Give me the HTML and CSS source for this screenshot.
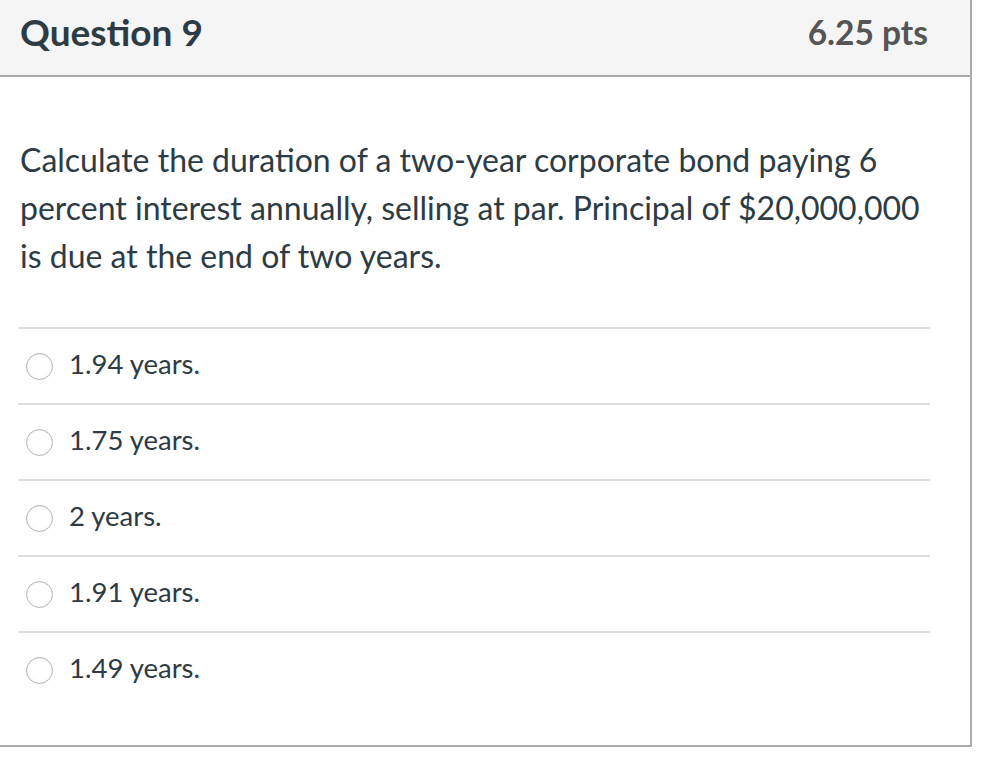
FILE: index.html
```html
<!DOCTYPE html>
<html>
<head>
<meta charset="utf-8">
<link rel="stylesheet" href="styles.css">
</head>
<body>
<div class="question">
  <div class="header">
    <span class="title">Question 9</span>
    <span class="points">6.25 pts</span>
  </div>
  <div class="body">
    <p class="prompt">Calculate the duration of a two-year corporate bond paying 6 percent interest annually, selling at par. Principal of $20,000,000 is due at the end of two years.</p>
    <div class="answers">
      <label class="answer"><span class="radio"></span><span class="label">1.94 years.</span></label>
      <label class="answer"><span class="radio"></span><span class="label">1.75 years.</span></label>
      <label class="answer"><span class="radio"></span><span class="label">2 years.</span></label>
      <label class="answer"><span class="radio"></span><span class="label">1.91 years.</span></label>
      <label class="answer"><span class="radio"></span><span class="label">1.49 years.</span></label>
    </div>
  </div>
</div>
</body>
</html>
```
FILE: styles.css
```css
html, body {
  margin: 0;
  padding: 0;
  background: #fff;
}
body {
  font-family: Lato, "Liberation Sans", sans-serif;
  color: #2d3b45;
}
.question {
  width: 970px;
  border-right: 2px solid #aaaaaa;
  border-bottom: 2px solid #aaaaaa;
}
.header {
  height: 75px;
  background: #f5f5f5;
  border-bottom: 2px solid #aaaaaa;
  display: flex;
  align-items: center;
  justify-content: space-between;
  padding: 0 42px 0 20px;
}
.title {
  font-size: 37px;
  font-weight: 700;
  color: #2d3b45;
  margin-top: -13px;
}
.points {
  font-size: 33.5px;
  font-weight: 700;
  color: #555555;
  margin-top: -11px;
}
.body {
  padding: 59px 40px 38px 18px;
}
.prompt {
  margin: 0 0 47px 2px;
  font-size: 32px;
  line-height: 48px;
}
.answers {
  display: flex;
  flex-direction: column;
}
.answer {
  display: flex;
  align-items: center;
  height: 74px;
  border-top: 2px solid #dddddd;
  padding-left: 8px;
  font-size: 27.5px;
}
.radio {
  width: 25px;
  height: 25px;
  border: 1px solid #b5b5b5;
  border-radius: 50%;
  background: radial-gradient(circle at 50% 40%, #ffffff 55%, #f0f0f0 100%);
  box-shadow: inset 0 1px 1px rgba(0,0,0,0.08);
  margin-right: 16px;
  flex: none;
}
.label {
  line-height: 1;
  margin-bottom: 5px;
}
```
